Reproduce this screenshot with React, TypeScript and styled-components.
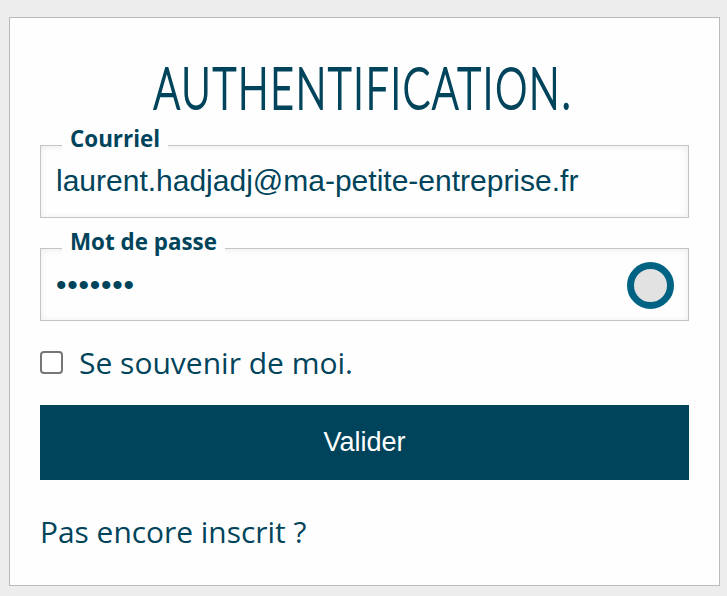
import React from "react";
import styled, { createGlobalStyle } from "styled-components";

const Global = createGlobalStyle`
  * { box-sizing: border-box; }
  body { margin: 0; background: #ededed; color: #00445b; font-family: "Open Sans", sans-serif; }
`;
const Page = styled.main`
  height: 596px;
  padding: 17px 7px 10px 9px;
`;
const Card = styled.form`
  display: flex;
  flex-direction: column;
  height: 569px;
  padding: 30px 30px 0;
  background: #fefefe;
  border: 1px solid #bbb;
`;
const Title = styled.h1`
  display: flex;
  justify-content: center;
  margin: 10px 0 0;
  height: 57px;
  line-height: 58px;
  font-family: Lato, sans-serif;
  font-size: 57px;
  font-weight: 300;
  white-space: nowrap;
`;
const TitleText = styled.span`
  transform: translateX(-1px) scaleX(0.71);
  letter-spacing: 2.6px;
  -webkit-text-stroke: 2px #00445b;
  stroke-linejoin: round;
`;
const Field = styled.div`
  position: relative;
  display: flex;
  flex-shrink: 0;
  align-items: center;
  justify-content: space-between;
  height: 73px;
  margin-top: 30px;
  padding: 0 14px 0 15px;
  border: 1px solid #c4c4c4;
  box-shadow: inset 0 1px 7px rgba(0, 0, 0, 0.08);
`;
const Legend = styled.label`
  position: absolute;
  top: -22px;
  left: 21px;
  padding: 0 8px;
  background: #fefefe;
  font-size: 22.4px;
  line-height: 30px;
  font-weight: 700;
`;
const Input = styled.input`
  flex: 1;
  min-width: 0;
  padding: 0 0 2px;
  border: 0;
  outline: 0;
  background: transparent;
  color: inherit;
  font: 30px "Liberation Sans", sans-serif;
  &[type="password"] { letter-spacing: 0.75px; padding: 0; }
`;
const Reveal = styled.button`
  width: 47px;
  height: 47px;
  margin-top: 1px;
  padding: 0;
  border: 7px solid #006384;
  border-radius: 50%;
  background: #e2e2e2;
`;
const Remember = styled.label`
  display: flex;
  flex-shrink: 0;
  align-items: center;
  gap: 16px;
  height: 40px;
  margin-top: 21px;
  font-size: 30px;
`;
const Check = styled.input`
  appearance: none;
  width: 23px;
  height: 23px;
  margin: 0;
  border: 2px solid #767676;
  border-radius: 4px;
  background: #fff;
`;
const Submit = styled.button`
  flex-shrink: 0;
  height: 75px;
  margin-top: 23px;
  border: 0;
  background: #00445b;
  color: #fff;
  font: 27px "Liberation Sans", sans-serif;
`;
const Register = styled.a`
  margin-top: 31px;
  font-size: 29.9px;
  line-height: 41px;
`;

export default function App() {
  return (
    <Page>
      <Global />
      <Card>
        <Title><TitleText>AUTHENTIFICATION.</TitleText></Title>
        <Field>
          <Legend htmlFor="email">Courriel</Legend>
          <Input id="email" defaultValue="laurent.hadjadj@ma-petite-entreprise.fr" />
        </Field>
        <Field>
          <Legend htmlFor="password">Mot de passe</Legend>
          <Input id="password" type="password" defaultValue="secrets" />
          <Reveal type="button" aria-label="Afficher le mot de passe" />
        </Field>
        <Remember><Check type="checkbox" />Se souvenir de moi.</Remember>
        <Submit type="button">Valider</Submit>
        <Register>Pas encore inscrit ?</Register>
      </Card>
    </Page>
  );
}
